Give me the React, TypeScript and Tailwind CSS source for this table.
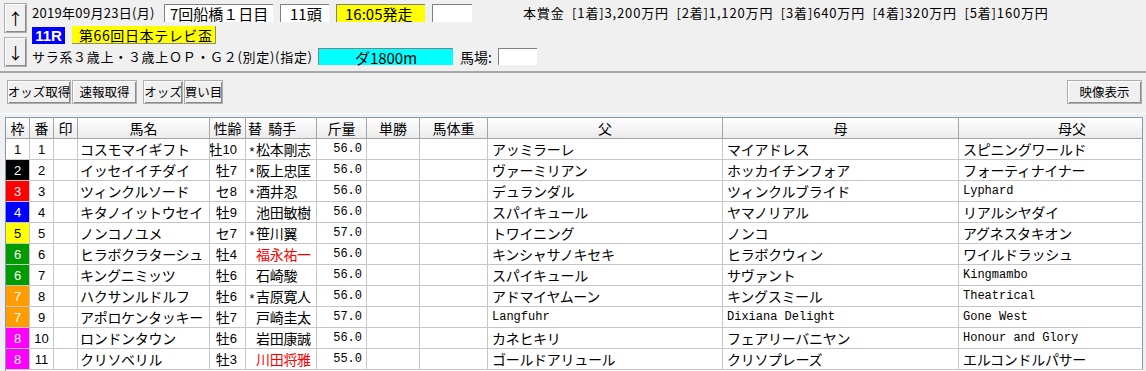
type Horse = {
  waku: number;
  ban: number;
  name: string;
  sexAge: string;
  mark: string;
  jockey: string;
  red?: boolean;
  weight: string;
  sire: string;
  dam: string;
  damSire: string;
};

const horses: Horse[] = [
  { waku: 1, ban: 1, name: 'コスモマイギフト', sexAge: '牡10', mark: '*', jockey: '松本剛志', weight: '56.0', sire: 'アッミラーレ', dam: 'マイアドレス', damSire: 'スピニングワールド' },
  { waku: 2, ban: 2, name: 'イッセイイチダイ', sexAge: '牡7', mark: '*', jockey: '阪上忠匡', weight: '56.0', sire: 'ヴァーミリアン', dam: 'ホッカイチンフォア', damSire: 'フォーティナイナー' },
  { waku: 3, ban: 3, name: 'ツィンクルソード', sexAge: 'セ8', mark: '*', jockey: '酒井忍', weight: '56.0', sire: 'デュランダル', dam: 'ツィンクルブライド', damSire: 'Lyphard' },
  { waku: 4, ban: 4, name: 'キタノイットウセイ', sexAge: '牡9', mark: '', jockey: '池田敏樹', weight: '56.0', sire: 'スパイキュール', dam: 'ヤマノリアル', damSire: 'リアルシヤダイ' },
  { waku: 5, ban: 5, name: 'ノンコノユメ', sexAge: 'セ7', mark: '*', jockey: '笹川翼', weight: '57.0', sire: 'トワイニング', dam: 'ノンコ', damSire: 'アグネスタキオン' },
  { waku: 6, ban: 6, name: 'ヒラボクラターシュ', sexAge: '牡4', mark: '', jockey: '福永祐一', red: true, weight: '56.0', sire: 'キンシャサノキセキ', dam: 'ヒラボクウィン', damSire: 'ワイルドラッシュ' },
  { waku: 6, ban: 7, name: 'キングニミッツ', sexAge: '牡6', mark: '', jockey: '石崎駿', weight: '56.0', sire: 'スパイキュール', dam: 'サヴァント', damSire: 'Kingmambo' },
  { waku: 7, ban: 8, name: 'ハクサンルドルフ', sexAge: '牡6', mark: '*', jockey: '吉原寛人', weight: '56.0', sire: 'アドマイヤムーン', dam: 'キングスミール', damSire: 'Theatrical' },
  { waku: 7, ban: 9, name: 'アポロケンタッキー', sexAge: '牡7', mark: '', jockey: '戸崎圭太', weight: '57.0', sire: 'Langfuhr', dam: 'Dixiana Delight', damSire: 'Gone West' },
  { waku: 8, ban: 10, name: 'ロンドンタウン', sexAge: '牡6', mark: '', jockey: '岩田康誠', weight: '56.0', sire: 'カネヒキリ', dam: 'フェアリーバニヤン', damSire: 'Honour and Glory' },
  { waku: 8, ban: 11, name: 'クリソベリル', sexAge: '牡3', mark: '', jockey: '川田将雅', red: true, weight: '55.0', sire: 'ゴールドアリュール', dam: 'クリソプレーズ', damSire: 'エルコンドルパサー' },
];

const wakuColor: Record<number, string> = {
  1: 'bg-white text-black',
  2: 'bg-black text-white',
  3: 'bg-[#ff0000] text-white',
  4: 'bg-[#0000ff] text-white',
  5: 'bg-[#ffff00] text-black',
  6: 'bg-[#009b00] text-white',
  7: 'bg-[#ff9c00] text-white',
  8: 'bg-[#ff00ff] text-white',
};

const btn =
  'flex items-center justify-center whitespace-nowrap border border-[#adadad] bg-[#f0f0f0] shadow-[inset_1px_1px_0_#fff,inset_-1px_-1px_0_#8a8a8a]';
const sunken = 'flex items-center whitespace-nowrap border-t border-l border-[#808080]';

const cell = 'flex items-center border-r border-b border-[#c6c6c6] h-[21px] overflow-hidden whitespace-nowrap';
const head =
  'flex items-center justify-center border-r border-b border-[#a5a5a5] h-[21px] bg-gradient-to-b from-white to-[#ececec] whitespace-nowrap text-[14px]';

function Txt({ s }: { s: string }) {
  // ascii names are narrower in the original font
  if (/^[\x00-\x7f]+$/.test(s)) return <span className="text-[12px] font-['Liberation_Mono',monospace]">{s}</span>;
  return <span className="text-[14px] tracking-[-0.3px]">{s}</span>;
}

export default function App() {
  return (
    <div className="w-[1146px] h-[371px] overflow-hidden bg-[#f0f0f0] text-black font-['Noto_Sans_CJK_JP',sans-serif] text-[13px] leading-none">
      {/* race header */}
      <div className="h-[68px] flex pl-[4px] pt-[3px] border-b-2 border-[#a8a8a8] box-content">
        <div className="flex flex-col gap-[4px]">
          <div className={`${btn} w-[23px] h-[30px] text-[16px]`}>↑</div>
          <div className={`${btn} w-[23px] h-[30px] text-[16px]`}>↓</div>
        </div>
        <div className="ml-[5px] flex flex-col">
          <div className="flex items-center h-[19px]">
            <span className="w-[132px] tracking-[0.3px]">2019年09月23日(月)</span>
            <div className={`${sunken} bg-white w-[109px] h-[18px] pl-[5px] text-[15px]`}>7回船橋１日目</div>
            <div className={`${sunken} bg-white w-[49px] h-[18px] ml-[7px] pl-[9px] text-[15px]`}>11頭</div>
            <div className={`${sunken} bg-[#ffff00] w-[89px] h-[18px] ml-[7px] pl-[8px] text-[15px]`}>16:05発走</div>
            <div className={`${sunken} bg-white w-[40px] h-[18px] ml-[7px]`}></div>
            <span className="ml-[51px] text-[13px] tracking-[0.85px] whitespace-pre">
              本賞金  [1着]3,200万円  [2着]1,120万円  [3着]640万円  [4着]320万円  [5着]160万円
            </span>
          </div>
          <div className="flex items-center h-[18px] mt-[4px]">
            <div className="bg-[#0000ff] text-white w-[33px] h-[17px] flex items-center justify-center text-[15px] font-bold font-['Liberation_Sans',sans-serif]">
              11R
            </div>
            <div className="bg-[#ffff00] w-[144px] h-[18px] ml-[7px] flex items-center pl-[7px] border-r border-b border-[#8a8a8a] text-[14px] tracking-[0.6px]">
              第66回日本テレビ盃
            </div>
          </div>
          <div className="flex items-center h-[17px] mt-[4px]">
            <span className="w-[286px] tracking-[0.7px]">サラ系３歳上・３歳上ＯＰ・Ｇ２(別定)(指定)</span>
            <div className={`${sunken} bg-[#00ffff] w-[135px] h-[17px] justify-center text-[15px]`}>ダ1800m</div>
            <span className="ml-[7px] w-[38px] text-[14px]">馬場:</span>
            <div className={`${sunken} bg-white w-[39px] h-[17px]`}></div>
          </div>
        </div>
      </div>

      {/* buttons */}
      <div className="h-[41px] flex items-start pt-[7px] pl-[7px] pr-[4px] border-b border-white text-[12.5px]">
        <div className={`${btn} w-[64px] h-[24px]`}>オッズ取得</div>
        <div className={`${btn} w-[65px] h-[24px] ml-[1px]`}>速報取得</div>
        <div className={`${btn} w-[40px] h-[24px] ml-[6px]`}>オッズ</div>
        <div className={`${btn} w-[39px] h-[24px] ml-[1px]`}>買い目</div>
        <div className={`${btn} w-[75px] h-[24px] ml-auto`}>映像表示</div>
      </div>

      {/* entry table */}
      <div className="mt-[3px] ml-[5px] w-[1138px] h-[260px] bg-white border-t border-l border-[#8399b1] overflow-hidden">
        <div className="grid grid-cols-[24px_24px_24px_132px_36px_71px_50px_53px_68px_235px_236px_184px]">
          <div className={head}>枠</div>
          <div className={head}>番</div>
          <div className={head}>印</div>
          <div className={head}>馬名</div>
          <div className={head}>性齢</div>
          <div className={`${head} !justify-start pl-[2px]`}>替&nbsp;&nbsp;騎手</div>
          <div className={head}>斤量</div>
          <div className={head}>単勝</div>
          <div className={head}>馬体重</div>
          <div className={head}>父</div>
          <div className={head}>母</div>
          <div className={`${head} !justify-start pl-[99px] !border-r-[#8399b1]`}>母父</div>

          {horses.map((h) => (
            <div key={h.ban} className="contents">
              <div className={`${cell} justify-center text-[13px] font-['Liberation_Sans',sans-serif] ${wakuColor[h.waku]}`}>{h.waku}</div>
              <div className={`${cell} justify-center text-[13px] font-['Liberation_Sans',sans-serif]`}>{h.ban}</div>
              <div className={cell}></div>
              <div className={`${cell} pl-[2px]`}>
                <Txt s={h.name} />
              </div>
              <div className={`${cell} justify-end pr-[8px] text-[14px]`}>
                {h.sexAge.slice(0, 1)}
                <span className="text-[13px] font-['Liberation_Sans',sans-serif]">{h.sexAge.slice(1)}</span>
              </div>
              <div className={`${cell} pl-[2px] ${h.red ? 'text-[#ff0000]' : ''}`}>
                <span className="inline-block w-[8px] text-[13px] translate-y-[3px] font-['Liberation_Mono',monospace]">{h.mark}</span>
                <span className="text-[14px] tracking-[-0.3px]">{h.jockey}</span>
              </div>
              <div className={`${cell} justify-end pr-[4px] text-[12px] font-['Liberation_Mono',monospace]`}>{h.weight}</div>
              <div className={cell}></div>
              <div className={cell}></div>
              <div className={`${cell} pl-[4px]`}>
                <Txt s={h.sire} />
              </div>
              <div className={`${cell} pl-[4px]`}>
                <Txt s={h.dam} />
              </div>
              <div className={`${cell} pl-[4px] !border-r-[#8399b1]`}>
                <Txt s={h.damSire} />
              </div>
            </div>
          ))}
        </div>
      </div>
    </div>
  );
}
